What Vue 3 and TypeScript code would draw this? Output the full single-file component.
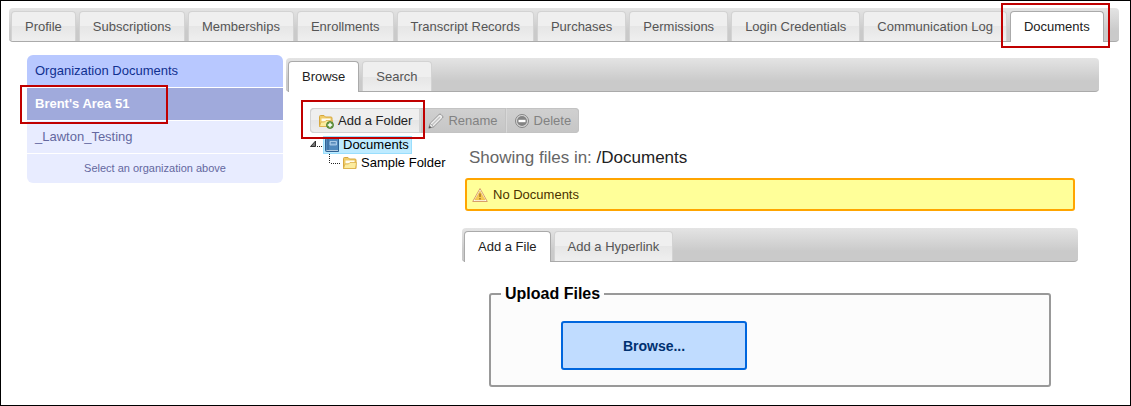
<script setup lang="ts">
import { ref } from 'vue'

const sections: string[] = [
  'Profile',
  'Subscriptions',
  'Memberships',
  'Enrollments',
  'Transcript Records',
  'Purchases',
  'Permissions',
  'Login Credentials',
  'Communication Log',
  'Documents',
]
const section = ref('Documents')

const organizations: string[] = ["Brent's Area 51", '_Lawton_Testing']
const organization = ref("Brent's Area 51")

const modes: string[] = ['Browse', 'Search']
const mode = ref('Browse')

const addModes: string[] = ['Add a File', 'Add a Hyperlink']
const addMode = ref('Add a File')
</script>

<template>
  <div class="page">
    <nav class="tabs" aria-label="Sections">
      <button
        v-for="name in sections"
        :key="name"
        type="button"
        class="tab"
        :class="{ active: section === name, callout: name === 'Documents' }"
        @click="section = name"
      >
        {{ name }}
      </button>
    </nav>

    <div class="columns">
      <aside class="organizations">
        <h2 class="org-title">Organization Documents</h2>
        <button
          v-for="name in organizations"
          :key="name"
          type="button"
          class="org"
          :class="{ selected: organization === name, callout: name === organizations[0] }"
          @click="organization = name"
        >
          {{ name }}
        </button>
        <p class="org-hint">Select an organization above</p>
      </aside>

      <main class="main">
        <div class="tabs">
          <button
            v-for="name in modes"
            :key="name"
            type="button"
            class="tab"
            :class="{ active: mode === name }"
            @click="mode = name"
          >
            {{ name }}
          </button>
        </div>

        <div class="browser">
          <div class="toolbar">
            <button type="button" class="tool callout">
              <svg class="icon" viewBox="0 0 16 16" aria-hidden="true">
                <path d="M1.500 13.500V3.500q0-1 1-1h3.500l1.500 1.500H13q1 0 1 1v8.500z" fill="#f0cc68" stroke="#d6a840" />
                <path d="M3.500 5.500h9v3h-9z" fill="#fffdf2" />
                <path d="M1.500 13.500L3 9h3.500l1.500-1.500h6.500L13.500 13.500z" fill="#fcec9f" stroke="#dcb04a" stroke-width=".8" />
                <circle cx="12" cy="12" r="3.500" fill="#6a9c45" stroke="#44742a" stroke-width=".8" />
                <path d="M12 9.800v4.400M9.800 12h4.400" stroke="#fff" stroke-width="1.400" />
              </svg>
              Add a Folder
            </button>
            <button type="button" class="tool" disabled>
              <svg class="icon" viewBox="0 0 16 16" aria-hidden="true">
                <path d="M.8 15.200l1.400-4.900L11 1.500q1-1 2 0l1.500 1.500q1 1 0 2L5.700 13.800z" fill="#ededed" stroke="#8c8c8c" stroke-width=".9" />
                <path d="M4 12l8-8" stroke="#c2c2c2" stroke-width="1.200" />
                <path d="M2.300 10.500l3.200 3.200" stroke="#999" stroke-width=".8" />
                <path d="M.8 15.200l.8-2.700 1.900 1.900z" fill="#555" />
              </svg>
              Rename
            </button>
            <button type="button" class="tool" disabled>
              <svg class="icon" viewBox="0 0 16 16" aria-hidden="true">
                <circle cx="8" cy="8" r="6.500" fill="#d8d8d8" stroke="#858585" />
                <circle cx="8" cy="8" r="5" fill="#848484" />
                <path d="M4.500 8h7" stroke="#fff" stroke-width="2.400" />
              </svg>
              Delete
            </button>
          </div>

          <div class="workspace">
            <div class="tree" role="tree" aria-label="Folders">
              <div class="node" role="treeitem" aria-expanded="true">
                <svg class="joint" viewBox="0 0 13 18" aria-hidden="true">
                  <path d="M5.500 5v5.500H.5z" fill="#777" stroke="#222" stroke-width=".9" />
                  <path d="M7 10.500h6" stroke="#222" stroke-dasharray="1 1" />
                </svg>
                <a class="node-link current" href="#documents">
                  <svg class="icon" viewBox="0 0 16 16" aria-hidden="true">
                    <path d="M1.500 2.500q0-1 1-1h12v13h-12q-1 0-1-1z" fill="#4f88bd" stroke="#2f6193" />
                    <path d="M4 2v12" stroke="#2f6193" />
                    <path d="M6 4.500h6.500v3.500H6z" fill="#84afd8" stroke="#b7d3ec" stroke-width=".8" />
                    <path d="M7 5.800h4.500" stroke="#3a6d9f" stroke-width=".8" />
                    <path d="M2.500 13.500h11.500" stroke="#b9cedf" />
                  </svg>
                  Documents
                </a>
              </div>
              <div class="node child" role="treeitem">
                <svg class="joint" viewBox="0 0 13 18" aria-hidden="true">
                  <path d="M1.500 0v9M3 9.500h9" stroke="#222" stroke-dasharray="1 1" fill="none" />
                </svg>
                <a class="node-link" href="#sample">
                  <svg class="icon" viewBox="0 0 16 16" aria-hidden="true">
                    <path d="M1.500 13.500V3.500q0-1 1-1h3.500l1.500 1.500H13q1 0 1 1v8.500z" fill="#f0cc68" stroke="#d6a840" />
                    <path d="M3.500 5.500h9v3h-9z" fill="#fffdf2" />
                    <path d="M1.500 13.500L3 9h3.500l1.500-1.500h6.500L13.500 13.500z" fill="#fcec9f" stroke="#dcb04a" stroke-width=".8" />
                  </svg>
                  Sample Folder
                </a>
              </div>
            </div>

            <section class="detail">
              <h1 class="heading">Showing files in: <span class="path">/Documents</span></h1>
              <div class="notice" role="status">
                <svg class="icon" viewBox="0 0 16 16" aria-hidden="true">
                  <path d="M8 1.500L15.300 14.500H.7z" fill="#fff" stroke="#d7a069" stroke-linejoin="round" />
                  <path d="M8 4L13.300 13H2.700z" fill="#f7ca52" stroke="#e9b745" stroke-width=".5" />
                  <path d="M8 6.500v3.500M8 11v1.500" stroke="#a87426" stroke-width="1.500" />
                </svg>
                No Documents
              </div>
              <div class="tabs">
                <button
                  v-for="name in addModes"
                  :key="name"
                  type="button"
                  class="tab"
                  :class="{ active: addMode === name }"
                  @click="addMode = name"
                >
                  {{ name }}
                </button>
              </div>
              <fieldset class="upload">
                <legend>Upload Files</legend>
                <button type="button" class="browse">Browse...</button>
              </fieldset>
            </section>
          </div>
        </div>
      </main>
    </div>
  </div>
</template>

<style>
body {
  background: #fff;
}
</style>

<style scoped>
.page {
  box-sizing: border-box;
  min-height: 100vh;
  padding: 7px 11px 18px 8px;
  border: 1px solid #000;
  font: 13px/16px "Liberation Sans", Arial, sans-serif;
  color: #222;
}

button {
  font: inherit;
  cursor: pointer;
}

.tabs {
  display: flex;
  gap: 3px;
  height: 34px;
  box-sizing: border-box;
  padding: 3px 2px 0;
  border-bottom: 1px solid #aaa;
  border-radius: 4px;
  background: linear-gradient(#e4e4e4, #cacaca 70%);
}

.tab {
  position: relative;
  box-sizing: border-box;
  height: 30px;
  padding: 0 13px;
  border: 1px solid #d3d3d3;
  border-bottom: 0;
  border-radius: 4px 4px 0 0;
  background: linear-gradient(#efefef 50%, #e6e6e6 50%, #efefef);
  color: #555;
  white-space: nowrap;
}

.tab.active {
  height: 31px;
  padding-bottom: 1px;
  border-color: #aaa;
  background: #fff;
  color: #212121;
}

.callout {
  position: relative;
}

.callout::after {
  content: "";
  position: absolute;
  z-index: 2;
  border: 2px solid #c00000;
  pointer-events: none;
}

.tab.callout::after {
  inset: -9px -7px -6px -10px;
}

.columns {
  display: flex;
  gap: 3px;
  padding: 13px 20px 0 18px;
}

.organizations {
  flex: 0 0 256px;
  display: flex;
  flex-direction: column;
  align-self: flex-start;
  gap: 1px;
}

.org-title,
.org {
  box-sizing: border-box;
  height: 32px;
  margin: 0;
  padding: 0 8px;
  border: 0;
  font-size: 13px;
  line-height: 32px;
  text-align: left;
}

.org-title {
  border-radius: 6px 6px 0 0;
  background: #b8c8ff;
  color: #103090;
  font-weight: normal;
}

.org {
  background: #e8ecff;
  color: #6468a0;
}

.org.selected {
  background: #a0aadc;
  color: #fff;
  font-weight: bold;
}

.org.callout::after {
  inset: -3px 115px -4px -7px;
}

.org-hint {
  margin: 0;
  border-radius: 0 0 6px 6px;
  background: #e8ecff;
  color: #6468a0;
  font-size: 11px;
  line-height: 29px;
  text-align: center;
}

.main {
  flex: 1;
  min-width: 0;
  padding-top: 3px;
}

.browser {
  padding: 16px 21px 0 24px;
}

.toolbar {
  display: flex;
  width: fit-content;
  border-radius: 4px;
  background: #cacaca;
}

.tool {
  display: flex;
  align-items: center;
  gap: 4px;
  box-sizing: border-box;
  height: 25px;
  padding: 0 7px;
  border: 1px solid #d3d3d3;
  background: linear-gradient(#efefef 50%, #e6e6e6 50%, #ededed);
  color: #222;
}

.tool:first-child {
  border-radius: 4px 0 0 4px;
}

.tool:last-child {
  border-radius: 0 4px 4px 0;
}

.tool:disabled {
  border-color: #c3c3c3 #c3c3c3 #c3c3c3 #d8d8d8;
  background: linear-gradient(#d0d0d0, #c6c6c6);
  color: #828282;
  cursor: default;
}

.tool.callout::after {
  inset: -9px -6px -7px -10px;
}

.icon {
  flex: none;
  width: 16px;
  height: 16px;
}

.workspace {
  display: flex;
}

.tree {
  flex: 0 0 152px;
  padding-top: 3px;
}

.node {
  display: flex;
  height: 18px;
}

.child {
  margin-left: 18px;
}

.joint {
  flex: none;
  width: 13px;
  height: 18px;
}

.node-link {
  display: flex;
  align-items: center;
  gap: 3px;
  padding: 0 3px 0 1px;
  color: #000;
  text-decoration: none;
  white-space: nowrap;
}

.node-link.current {
  box-shadow: inset 0 0 0 1px #99defd;
  background: #beebff;
}

.detail {
  flex: 1;
  min-width: 0;
  padding-top: 15px;
}

.heading {
  margin: 0 0 10px 7px;
  color: #666;
  font-size: 17px;
  font-weight: normal;
  line-height: 20px;
}

.path {
  color: #222;
}

.notice {
  display: flex;
  align-items: center;
  gap: 5px;
  box-sizing: border-box;
  height: 33px;
  margin: 0 3px 17px;
  padding: 0 5px;
  border: 2px solid #ffa500;
  border-radius: 3px;
  background: #ffff99;
  color: #4a3200;
}

.upload {
  margin: 22px 27px 0;
  padding: 17px 70px 15px;
  border: 2px solid #999;
  border-radius: 3px;
  background: #fcfcfc;
}

.upload legend {
  margin-left: -60px;
  padding: 0 4px;
  color: #000;
  font-size: 16px;
  font-weight: bold;
  line-height: 20px;
}

.browse {
  display: block;
  width: 186px;
  height: 49px;
  border: 2px solid #0066dd;
  border-radius: 3px;
  background: #c0dcff;
  color: #003070;
  font-size: 14px;
  font-weight: bold;
}
</style>
